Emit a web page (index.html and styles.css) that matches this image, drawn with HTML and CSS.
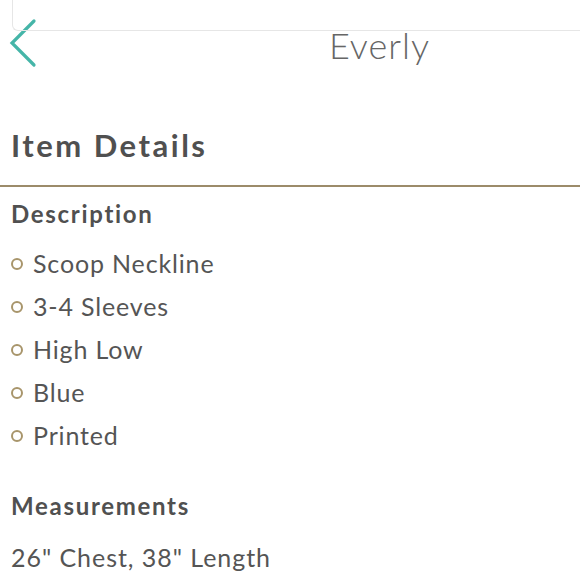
FILE: index.html
```html
<!DOCTYPE html>
<html>
<head>
<meta charset="utf-8">
<link rel="stylesheet" href="styles.css">
</head>
<body>
<div class="page">
  <div class="topbox"></div>
  <header class="nav">
    <svg class="back" viewBox="0 0 30 50" width="30" height="50">
      <polyline points="26,3 4,25 26,47" fill="none" stroke="#45b5a8" stroke-width="3.2" stroke-linecap="round" stroke-linejoin="miter"/>
    </svg>
    <div class="title">Everly</div>
  </header>
  <h1 class="heading">Item Details</h1>
  <div class="divider"></div>
  <section class="content">
    <h2 class="sub">Description</h2>
    <ul class="list">
      <li class="item"><span class="dot"></span>Scoop Neckline</li>
      <li class="item"><span class="dot"></span>3-4 Sleeves</li>
      <li class="item"><span class="dot"></span>High Low</li>
      <li class="item"><span class="dot"></span>Blue</li>
      <li class="item"><span class="dot"></span>Printed</li>
    </ul>
    <h2 class="sub sub-meas">Measurements</h2>
    <p class="text">26" Chest, 38" Length</p>
  </section>
</div>
</body>
</html>
```

FILE: styles.css
```css
html, body {
  margin: 0;
  padding: 0;
  background: #ffffff;
}
body {
  font-family: "Lato", "Open Sans", sans-serif;
  color: #555555;
  width: 580px;
  height: 580px;
  overflow: hidden;
}
.page {
  position: relative;
}
.topbox {
  position: absolute;
  left: 12px;
  top: -2px;
  right: -4px;
  height: 32px;
  border-left: 1px solid #e6e6e6;
  border-bottom: 1px solid #e6e6e6;
  border-bottom-left-radius: 6px;
}
.nav {
  height: 100px;
  display: flex;
  align-items: flex-start;
}
.back {
  display: block;
  margin-left: 8px;
  margin-top: 18px;
  flex: none;
}
.title {
  margin-left: 291px;
  margin-top: 27px;
  font-size: 36px;
  line-height: 36px;
  font-weight: 300;
  letter-spacing: 1px;
  color: #666666;
}
.heading {
  margin: 25px 0 20px 11px;
  font-size: 31px;
  line-height: 40px;
  font-weight: 700;
  letter-spacing: 2.5px;
  color: #505050;
}
.divider {
  height: 2px;
  background: #9c8b6a;
}
.content {
  padding-left: 11px;
}
.sub {
  margin: 12px 0 0 0;
  font-size: 24px;
  line-height: 30px;
  font-weight: 700;
  letter-spacing: 1.7px;
  color: #505050;
}
.sub-meas {
  margin-top: 34px;
}
.list {
  list-style: none;
  margin: 13px 0 0 0;
  padding: 0;
}
.item {
  display: flex;
  align-items: center;
  height: 43px;
  font-size: 25px;
  line-height: 43px;
  letter-spacing: 0.85px;
}
.dot {
  width: 8px;
  height: 8px;
  border: 2px solid #a8956b;
  border-radius: 50%;
  margin-right: 10px;
  flex: none;
}
.text {
  margin: 15px 0 0 0;
  font-size: 25px;
  line-height: 43px;
  letter-spacing: 0.95px;
}
```
